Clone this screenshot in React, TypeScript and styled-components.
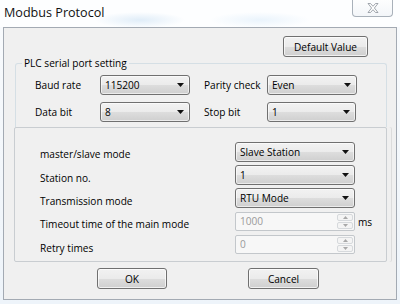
import React from "react";
import styled, { createGlobalStyle } from "styled-components";

const Global = createGlobalStyle`
  html, body { margin: 0; padding: 0; }
  body {
    width: 400px; height: 304px; overflow: hidden;
    font-family: "Open Sans", "Noto Sans", "Liberation Sans", sans-serif;
    font-size: 10.1px; color: #000;
  }
  * { box-sizing: border-box; }
`;

const Window = styled.div`
  width: 400px;
  height: 304px;
  background: linear-gradient(180deg, #f9fbfd 0%, #eef4fa 100%);
  display: flex;
  flex-direction: column;
  overflow: hidden;
`;

const TitleBar = styled.div`
  height: 27px;
  display: flex;
  align-items: flex-start;
  justify-content: space-between;
  padding: 0 7px 0 4px;
  background:
    radial-gradient(ellipse 45px 8px at 140px 20px, rgba(170, 205, 235, 0.35), transparent),
    radial-gradient(ellipse 50px 8px at 260px 20px, rgba(190, 220, 245, 0.3), transparent),
    #fdfeff;
`;

const Title = styled.span`
  margin-top: 4px;
  font-size: 12.6px;
  line-height: 17px;
  color: #111;
`;

const CloseBtn = styled.div`
  width: 41px;
  height: 20px;
  margin-top: -3px;
  border: 1px solid #a9b1ba;
  border-top: none;
  border-radius: 0 0 4px 4px;
  background: linear-gradient(180deg, #ffffff, #f3f6f9);
  display: flex;
  align-items: center;
  justify-content: center;
  padding-top: 2px;
`;

const Client = styled.div`
  margin: 0 3px;
  height: 273px;
  border: 1px solid #a3aab3;
  background: #f0f0f0;
  display: flex;
  flex-direction: column;
`;

const TopBar = styled.div`
  display: flex;
  justify-content: flex-end;
  padding: 8px 28px 0 0;
`;

const Button = styled.div<{ $w: number }>`
  width: ${(p) => p.$w}px;
  height: 21px;
  border: 1px solid #707070;
  border-radius: 3px;
  background: linear-gradient(180deg, #f2f2f2 0%, #ebebeb 50%, #dddddd 51%, #cfcfcf 100%);
  box-shadow: inset 0 0 0 1px rgba(255, 255, 255, 0.7);
  display: flex;
  align-items: center;
  justify-content: center;
  line-height: 14px;
`;

const Group1 = styled.div`
  margin: 6px 9px 0 11px;
  height: 64px;
  border: 1px solid #d5dfe5;
  border-bottom: none;
  border-radius: 3px 3px 0 0;
  padding: 0 0 0 19px;
`;

const Legend = styled.div`
  display: inline-block;
  margin: -8px 0 0 -13px;
  padding: 0 2px;
  background: #f0f0f0;
  line-height: 14px;
  vertical-align: top;
`;

const PortGrid = styled.div`
  margin-top: -3px;
  display: grid;
  grid-template-columns: 65px 90px 14px 63px 90px;
  grid-auto-rows: 20px;
  row-gap: 7px;
  align-items: center;
`;

const Label = styled.span<{ $shift?: number }>`
  line-height: 14px;
  padding-top: ${(p) => p.$shift ?? 0}px;
  white-space: nowrap;
`;

const SelectBox = styled.div<{ $w: number }>`
  width: ${(p) => p.$w}px;
  height: 20px;
  border: 1px solid #707070;
  border-radius: 3px;
  background: linear-gradient(180deg, #f2f2f2 0%, #ebebeb 50%, #dddddd 51%, #cfcfcf 100%);
  box-shadow: inset 0 0 0 1px rgba(255, 255, 255, 0.6);
  display: flex;
  align-items: center;
  justify-content: space-between;
  padding: 0 5px 0 4px;
  line-height: 14px;
`;

const Arrow = () => (
  <svg width="7" height="4" viewBox="0 0 7 4">
    <path d="M0 0 H7 L3.5 4 Z" fill="#111" />
  </svg>
);

const Select: React.FC<{ value: string; w: number }> = ({ value, w }) => (
  <SelectBox $w={w}>
    <span>{value}</span>
    <Arrow />
  </SelectBox>
);

const Group2 = styled.div`
  margin: 0 9px 0 10px;
  height: 135px;
  border: 1px solid #c9cdd1;
  border-radius: 2px;
  padding: 14px 0 0 25px;
  display: flex;
  flex-direction: column;
  box-shadow: 4px 0 0 0 #f0f0f0, 5px 0 0 0 #dcdcdc;
`;

const ModeRow = styled.div<{ $gap: number }>`
  margin-top: ${(p) => p.$gap}px;
  height: 19px;
  display: grid;
  grid-template-columns: 195px 120px auto;
  align-items: center;
`;

const SpinBox = styled.div`
  width: 120px;
  height: 19px;
  border: 1px solid #c3c7cb;
  border-radius: 2px;
  background: #f7f7f7;
  display: flex;
  align-items: stretch;
  color: #9a9a9a;
`;

const SpinText = styled.span`
  flex: 1;
  padding-left: 4px;
  line-height: 17px;
`;

const SpinBtns = styled.div`
  width: 17px;
  display: flex;
  flex-direction: column;
  gap: 1px;
  padding: 1px 1px 1px 0;
`;

const SpinBtn = styled.div`
  flex: 1;
  border: 1px solid #d6d9dc;
  border-radius: 2px;
  background: #f4f4f4;
  display: flex;
  align-items: center;
  justify-content: center;
`;

const Unit = styled.span`
  padding-left: 3px;
  line-height: 14px;
`;

const Spin: React.FC<{ value: string }> = ({ value }) => (
  <SpinBox>
    <SpinText>{value}</SpinText>
    <SpinBtns>
      <SpinBtn>
        <svg width="5" height="3" viewBox="0 0 5 3">
          <path d="M0 3 L2.5 0 L5 3 Z" fill="#a8a8a8" />
        </svg>
      </SpinBtn>
      <SpinBtn>
        <svg width="5" height="3" viewBox="0 0 5 3">
          <path d="M0 0 H5 L2.5 3 Z" fill="#a8a8a8" />
        </svg>
      </SpinBtn>
    </SpinBtns>
  </SpinBox>
);

const Footer = styled.div`
  display: flex;
  gap: 81px;
  padding: 6px 0 0 93px;
`;

export default function App() {
  return (
    <>
      <Global />
      <Window>
        <TitleBar>
          <Title>Modbus Protocol</Title>
          <CloseBtn>
            <svg width="12" height="10" viewBox="0 0 12 10">
              <path
                d="M1 0.5 H3.5 L6 3.3 L8.5 0.5 H11 L7.4 5 L11 9.5 H8.5 L6 6.7 L3.5 9.5 H1 L4.6 5 Z"
                fill="#fff"
                stroke="#8a9099"
                strokeWidth="0.8"
                strokeLinejoin="round"
              />
            </svg>
          </CloseBtn>
        </TitleBar>
        <Client>
          <TopBar>
            <Button $w={85}>Default Value</Button>
          </TopBar>
          <Group1>
            <Legend>PLC serial port setting</Legend>
            <PortGrid>
              <Label>Baud rate</Label>
              <Select value="115200" w={90} />
              <span />
              <Label>Parity check</Label>
              <Select value="Even" w={90} />
              <Label>Data bit</Label>
              <Select value="8" w={90} />
              <span />
              <Label>Stop bit</Label>
              <Select value="1" w={89} />
            </PortGrid>
          </Group1>
          <Group2>
            <ModeRow $gap={0}>
              <Label $shift={3}>master/slave mode</Label>
              <Select value="Slave Station" w={120} />
            </ModeRow>
            <ModeRow $gap={3}>
              <Label $shift={7}>Station no.</Label>
              <Select value="1" w={120} />
            </ModeRow>
            <ModeRow $gap={4}>
              <Label $shift={7}>Transmission mode</Label>
              <Select value="RTU Mode" w={120} />
            </ModeRow>
            <ModeRow $gap={6}>
              <Label $shift={4}>Timeout time of the main mode</Label>
              <Spin value="1000" />
              <Unit>ms</Unit>
            </ModeRow>
            <ModeRow $gap={3}>
              <Label $shift={7}>Retry times</Label>
              <Spin value="0" />
            </ModeRow>
          </Group2>
          <Footer>
            <Button $w={70}>OK</Button>
            <Button $w={71}>Cancel</Button>
          </Footer>
        </Client>
      </Window>
    </>
  );
}
